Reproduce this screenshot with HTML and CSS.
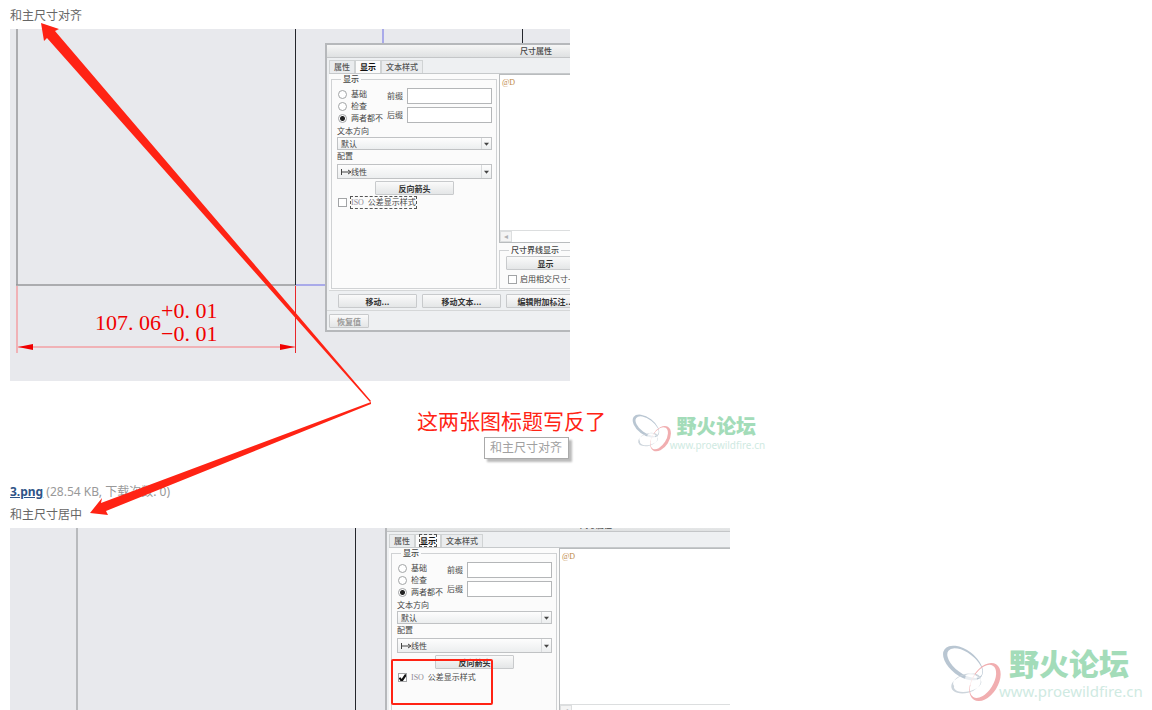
FILE: index.html
```
<!DOCTYPE html>
<html lang="zh-CN">
<head>
  <meta charset="UTF-8">
  <meta name="viewport" content="width=device-width, initial-scale=1.0">
  <title>野火论坛</title>
  <link rel="stylesheet" href="styles.css">
</head>
<body>
  <p class="caption">和主尺寸对齐</p>
  <div class="shot shot-small">
    <svg class="drawing" width="560" height="352">
      <path d="M7 0V256M6 256H286" stroke="#96989a" stroke-width="1.5" fill="none"/>
      <path d="M285.500 0V256M512.500 0V15" stroke="#24262c"/>
      <path d="M373 0V15M286 256H316" stroke="#9495e8" stroke-width="1.500"/>
      <path d="M7 257V324M8 318H285" stroke="#f2a0a4" stroke-width="1.500"/>
      <path d="M285.500 257V324" stroke="#e8262a"/>
      <path d="M8 318l15-3v6zM285 318l-15-3v6z" fill="#f00000"/>
    </svg>
    <div class="dimension">
      <span>107<span class="dot">.</span>06</span>
      <span class="tolerance">
        <span>+0<span class="dot">.</span>01</span>
        <span>−0<span class="dot">.</span>01</span>
      </span>
    </div>

    <div class="dialog">
      <div class="titlebar">尺寸属性</div>
      <div class="tabs">
        <button class="tab">属性</button>
        <button class="tab active">显示</button>
        <button class="tab">文本样式</button>
      </div>
      <div class="panes">
        <fieldset class="group display-group">
          <legend>显示</legend>
          <div class="display-top">
            <div class="radios">
              <label><input type="radio" name="mode1">基础</label>
              <label><input type="radio" name="mode1">检查</label>
              <label><input type="radio" name="mode1" checked>两者都不</label>
            </div>
            <div class="affixes">
              <label>前缀<input type="text"></label>
              <label>后缀<input type="text"></label>
            </div>
          </div>
          <label class="field-label" for="dir1">文本方向</label>
          <select id="dir1"><option>默认</option></select>
          <label class="field-label" for="conf1">配置</label>
          <select id="conf1" class="linear"><option>线性</option></select>
          <button class="btn flip">反向箭头</button>
          <label class="check"><input type="checkbox"><span class="focused"><span class="iso">ISO</span> 公差显示样式</span></label>
        </fieldset>
        <div class="right">
          <div class="editor">
            <div class="editor-text">@D</div>
            <div class="scroll"><button aria-label="向左">◂</button></div>
          </div>
          <fieldset class="group witness">
            <legend>尺寸界线显示</legend>
            <button class="btn">显示</button>
            <label class="check"><input type="checkbox">启用相交尺寸-</label>
          </fieldset>
        </div>
      </div>
      <div class="actions">
        <button class="btn">移动...</button>
        <button class="btn">移动文本...</button>
        <button class="btn">编辑附加标注...</button>
      </div>
      <div class="footer"><button class="btn reset" disabled>恢复值</button></div>
    </div>
  </div>

  <div class="remark">
    <div class="remark-text">
      <strong class="note">这两张图标题写反了</strong>
      <span class="tip">和主尺寸对齐</span>
    </div>
    <svg class="wm-small" viewBox="0 0 202 60">
      <path fill="#b9c6d2" fill-rule="evenodd" transform="rotate(37 21 18)" d="M-2 18a23 13 0 1 0 46 0a23 13 0 1 0 -46 0zM2 17a20 10 0 1 0 41 0a20 10 0 1 0 -41 0z"/>
      <path fill="#cdd5dc" fill-rule="evenodd" transform="rotate(-14 24 39)" d="M9 39a15 9 0 1 0 30 0a15 9 0 1 0 -30 0zM12 38a14 7 0 1 0 27 0a14 7 0 1 0 -27 0z"/>
      <path fill="#f1aeb0" fill-rule="evenodd" transform="rotate(-58 43 37)" d="M22 37a21 13 0 1 0 42 0a21 13 0 1 0 -42 0zM24 35a18 10 0 1 0 37 0a18 10 0 1 0 -37 0z"/>
      <circle cx="29" cy="34" r="6" fill="#fff" opacity=".7"/>
      <text class="wm-name" x="67" y="30">野火论坛</text>
      <text class="wm-url" x="57" y="52">www.proewildfire.cn</text>
    </svg>
  </div>

  <p class="file"><a href="#">3.png</a> (28.54 KB, 下载次数: 0)</p>
  <p class="caption">和主尺寸居中</p>
  <div class="shot shot-large">
    <svg class="drawing" width="720" height="200">
      <path d="M67 0V200" stroke="#a8aaac" stroke-width="1.500"/>
      <path d="M345.500 0V200" stroke="#24262c"/>
    </svg>
    <div class="dialog dialog-scrolled">
      <div class="titlebar">尺寸属性</div>
      <div class="tabs">
        <button class="tab">属性</button>
        <button class="tab active"><span class="focused">显示</span></button>
        <button class="tab">文本样式</button>
      </div>
      <div class="panes">
        <fieldset class="group display-group">
          <legend>显示</legend>
          <div class="display-top">
            <div class="radios">
              <label><input type="radio" name="mode2">基础</label>
              <label><input type="radio" name="mode2">检查</label>
              <label><input type="radio" name="mode2" checked>两者都不</label>
            </div>
            <div class="affixes">
              <label>前缀<input type="text"></label>
              <label>后缀<input type="text"></label>
            </div>
          </div>
          <label class="field-label" for="dir2">文本方向</label>
          <select id="dir2"><option>默认</option></select>
          <label class="field-label" for="conf2">配置</label>
          <select id="conf2" class="linear"><option>线性</option></select>
          <button class="btn flip">反向箭头</button>
          <label class="check"><input type="checkbox" checked><span><span class="iso">ISO</span> 公差显示样式</span></label>
        </fieldset>
        <div class="right">
          <div class="editor">
            <div class="editor-text">@D</div>
            <div class="scroll"><button aria-label="向左">◂</button></div>
          </div>
        </div>
      </div>
    </div>
    <div class="highlight"></div>
  </div>

  <!-- red arrows drawn over both pictures -->
  <svg class="arrows" width="620" height="540">
    <g fill="#ff2314">
      <path d="M41 23L59 29L55 31L371 401L370 402L47 38L44 41Z"/>
      <path d="M371 402L371 404L106 511L108 515L90 513L102 498L101 503Z"/>
    </g>
  </svg>
  <svg class="wm-large" viewBox="0 0 202 60">
    <path fill="#b9c6d2" fill-rule="evenodd" transform="rotate(37 21 18)" d="M-2 18a23 13 0 1 0 46 0a23 13 0 1 0 -46 0zM2 17a20 10 0 1 0 41 0a20 10 0 1 0 -41 0z"/>
    <path fill="#cdd5dc" fill-rule="evenodd" transform="rotate(-14 24 39)" d="M9 39a15 9 0 1 0 30 0a15 9 0 1 0 -30 0zM12 38a14 7 0 1 0 27 0a14 7 0 1 0 -27 0z"/>
    <path fill="#f1aeb0" fill-rule="evenodd" transform="rotate(-58 43 37)" d="M22 37a21 13 0 1 0 42 0a21 13 0 1 0 -42 0zM24 35a18 10 0 1 0 37 0a18 10 0 1 0 -37 0z"/>
    <circle cx="29" cy="34" r="6" fill="#fff" opacity=".7"/>
    <text class="wm-name" x="67" y="30">野火论坛</text>
    <text class="wm-url" x="57" y="52">www.proewildfire.cn</text>
  </svg>
</body>
</html>
```
FILE: styles.css
```
* {
  box-sizing: border-box;
}

body {
  margin: 0;
  padding: 1px 10px 0;
  height: 100vh;
  overflow: hidden;
  position: relative;
  background: #fff;
  color: #666;
  font: 12px/18px "Noto Sans", "Noto Sans CJK SC", sans-serif;
}

.caption {
  margin: 0;
  padding: 6px 0 4px;
}

.file {
  margin: 0;
  color: #999;
}

.file a {
  color: #2f5487;
  font-weight: bold;
}

.shot {
  position: relative;
  overflow: hidden;
  background: #e8e9ed;
}

.shot-small {
  max-width: 560px;
  height: 352px;
}

.shot-large {
  max-width: 720px;
  height: 200px;
}

.drawing {
  position: absolute;
  left: 0;
  top: 0;
}

.dimension {
  position: absolute;
  left: 85px;
  top: 270px;
  display: flex;
  align-items: center;
  color: #f00000;
  font: 22px/23px "Liberation Serif", serif;
}

.tolerance {
  display: flex;
  flex-direction: column;
}

.dot {
  display: inline-block;
  width: 11px;
}

/* dialog window */
.dialog {
  position: absolute;
  left: 315px;
  top: 14px;
  width: 422px;
  border: 2px solid #b6b8bb;
  background: #eef0f2;
  color: #444;
  font: 8px/12px "Noto Sans CJK SC", sans-serif;
}

.dialog-scrolled {
  left: 375px;
  top: -11px;
}

.titlebar {
  height: 13px;
  border-bottom: 1px solid #c4c6c8;
  background: linear-gradient(#f6f6f6, #dfe1e2);
  text-align: center;
  font-weight: 500;
}

.tabs {
  display: flex;
  height: 15px;
  padding: 2px 0 0 2px;
}

.tab {
  padding: 0 4px;
  border: 1px solid #d0d3d4;
  border-bottom: 0;
  background: #eaecee;
  color: #555;
  font: 500 8px/12px "Noto Sans CJK SC", sans-serif;
}

.tab.active {
  background: #fbfbfb;
  color: #111;
  font-weight: bold;
}

.panes {
  display: flex;
  gap: 2px;
  height: 218px;
  margin-left: 2px;
  padding: 0 0 1px 2px;
  border-top: 1px solid #c6c9cb;
  border-bottom: 1px solid #d5d7d8;
  background: #fbfbfb;
}

.group {
  min-width: 0;
  margin: 0;
  border: 1px solid #d0d2d4;
}

.group legend {
  padding: 0 2px;
  line-height: 10px;
  font-weight: 500;
}

.display-group {
  width: 166px;
  padding: 4px 4px 0 5px;
}

.display-group legend {
  margin-left: 4px;
}

.display-top {
  display: flex;
  justify-content: space-between;
  margin-bottom: 1px;
}

.radios label,
.affixes label,
.check {
  display: flex;
  align-items: center;
}

.affixes label {
  gap: 4px;
  height: 16px;
  margin-bottom: 3px;
}

.affixes label:last-child {
  margin-bottom: 0;
}

.dialog input[type="text"] {
  width: 85px;
  height: 16px;
  padding: 0;
  border: 1px solid #b4b6b8;
  background: #fff;
}

.dialog input[type="radio"],
.dialog input[type="checkbox"] {
  appearance: none;
  width: 9px;
  height: 9px;
  margin: 0 4px 0 1px;
  border: 1px solid #a2a4a6;
  background: #fff;
}

.dialog input[type="radio"] {
  border-radius: 50%;
}

.dialog input[type="radio"]:checked {
  background: radial-gradient(circle, #222 2px, #fff 3px);
}

.dialog input[type="checkbox"]:checked {
  background: #fff url("data:image/svg+xml,%3Csvg xmlns='http://www.w3.org/2000/svg' viewBox='0 0 8 8'%3E%3Cpath d='M1 4l2 3 4-6' fill='none' stroke='%23111' stroke-width='2'/%3E%3C/svg%3E") center / 8px no-repeat;
}

.field-label {
  display: block;
}

.dialog select {
  display: block;
  appearance: none;
  width: 100%;
  height: 13px;
  padding: 0 3px;
  border: 1px solid #c0c2c4;
  border-radius: 0;
  background: url("data:image/svg+xml,%3Csvg xmlns='http://www.w3.org/2000/svg' width='10' height='12'%3E%3Cpath d='M.5 0v12' stroke='%23d8dadc'/%3E%3Cpath d='M3 5h5l-2.500 3z' fill='%23444'/%3E%3C/svg%3E") right center no-repeat, linear-gradient(#fdfdfd, #eceeef);
  color: #444;
  font: 8px/11px "Noto Sans CJK SC", sans-serif;
}

.dialog select.linear {
  height: 15px;
  margin-top: 2px;
  padding-left: 13px;
  background: url("data:image/svg+xml,%3Csvg xmlns='http://www.w3.org/2000/svg' width='12' height='8'%3E%3Cpath d='M1.500 1v6M2 4h8M8 2l3 2-3 2' fill='none' stroke='%23444'/%3E%3C/svg%3E") 2px center no-repeat, url("data:image/svg+xml,%3Csvg xmlns='http://www.w3.org/2000/svg' width='10' height='14'%3E%3Cpath d='M.5 0v14' stroke='%23d8dadc'/%3E%3Cpath d='M3 6h5l-2.500 3z' fill='%23444'/%3E%3C/svg%3E") right center no-repeat, linear-gradient(#fdfdfd, #eceeef);
}

.btn {
  display: block;
  width: 79px;
  height: 14px;
  padding: 0;
  border: 1px solid #c8cacc;
  border-radius: 1px;
  background: linear-gradient(#fafafa, #e4e6e7);
  color: #333;
  font: bold 8px/11px "Noto Sans CJK SC", sans-serif;
  white-space: nowrap;
}

.flip {
  margin: 2px 0 2px 38px;
}

.focused {
  outline: 1px dashed #555;
  line-height: 10px;
}

.iso {
  margin-right: 2px;
  color: #8f8a96;
  font-family: "Liberation Serif", serif;
}

/* right column */
.right {
  flex: 1;
  display: flex;
  flex-direction: column;
}

.editor {
  display: flex;
  flex-direction: column;
  justify-content: space-between;
  height: 169px;
  border: 1px solid #b9bcbe;
  background: #fff;
}

.editor-text {
  padding: 2px;
  color: #c08a4a;
  font-family: "Liberation Serif", serif;
}

.scroll {
  height: 12px;
  border-top: 1px solid #dcdedf;
}

.scroll button {
  display: block;
  width: 12px;
  height: 11px;
  padding: 0;
  border: 1px solid #dcdedf;
  background: #f4f4f4;
  color: #b0b2b4;
  font: 8px/8px "DejaVu Sans", sans-serif;
}

.witness {
  flex: 1;
  margin-top: 2px;
  padding: 1px 6px 0;
}

.witness legend {
  margin-left: 3px;
}

.witness .btn {
  margin-bottom: 3px;
}

.witness .check {
  padding-left: 1px;
  white-space: nowrap;
}

.witness .check input {
  margin-right: 3px;
}

.actions {
  display: flex;
  gap: 5px;
  padding: 3px 0 2px 11px;
  border-bottom: 1px solid #d5d7d8;
}

.footer {
  padding: 3px 2px 2px;
}

.reset {
  width: 40px;
  color: #999;
}

/* text between the two pictures */
.remark {
  display: flex;
  align-items: flex-start;
  gap: 26px;
  height: 102px;
  padding: 27px 0 0 407px;
}

.remark-text {
  display: flex;
  flex-direction: column;
  align-items: flex-start;
}

.note {
  color: #ff2314;
  font-size: 21px;
  font-weight: normal;
  line-height: 26px;
}

.tip {
  margin: 3px 0 0 67px;
  padding: 1px 6px 1px 5px;
  border: 1px solid #aaa;
  box-shadow: 3px 3px 2px #bbb;
  background: #fff;
  color: #a0a0a0;
}

.wm-small {
  width: 134px;
  height: 40px;
  margin-top: 6px;
  overflow: visible;
}

.file + .caption {
  padding-top: 5px;
}

.wm-large {
  position: absolute;
  right: 8px;
  bottom: 5px;
  width: 202px;
  height: 60px;
  overflow: visible;
}

.wm-name {
  fill: #a3dcb9;
  font: 900 30px "Noto Sans CJK SC", sans-serif;
}

.wm-url {
  fill: #cfeae2;
  font: 15px "Noto Sans", sans-serif;
}

.highlight {
  position: absolute;
  left: 381px;
  top: 131px;
  width: 102px;
  height: 46px;
  border: 2px solid #ff2314;
  border-radius: 2px;
}

.arrows {
  position: absolute;
  left: 0;
  top: 0;
  pointer-events: none;
}
```
